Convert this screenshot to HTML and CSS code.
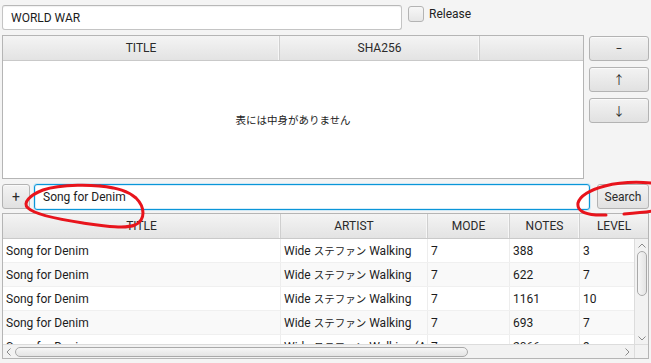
FILE: index.html
```html
<!DOCTYPE html>
<html lang="ja">
<head>
<meta charset="utf-8">
<link rel="stylesheet" href="styles.css">
</head>
<body>
<div class="app">
  <div class="toprow">
    <div class="field query">WORLD WAR</div>
    <div class="check"><span class="box"></span><span class="check-label">Release</span></div>
  </div>

  <div class="midrow">
    <div class="table upper">
      <div class="thead up-cols">
        <div class="th">TITLE</div>
        <div class="th">SHA256</div>
        <div class="th last"></div>
      </div>
      <div class="placeholder"><span class="jp">表には中身がありません</span></div>
    </div>
    <div class="side">
      <div class="btn side-btn">−</div>
      <div class="btn side-btn">↑</div>
      <div class="btn side-btn">↓</div>
    </div>
  </div>

  <div class="searchrow">
    <div class="btn plus">+</div>
    <div class="field focused">Song for Denim</div>
    <div class="btn search-btn">Search</div>
  </div>

  <div class="table lower">
    <div class="thead lo-head">
      <div class="th">TITLE</div>
      <div class="th">ARTIST</div>
      <div class="th">MODE</div>
      <div class="th">NOTES</div>
      <div class="th last">LEVEL</div>
    </div>
    <div class="lower-main">
      <div class="rows">
        <div class="tr lo-cols"><div class="td">Song for Denim</div><div class="td">Wide&nbsp;<span class="jp">ステファン</span>&nbsp;Walking</div><div class="td">7</div><div class="td">388</div><div class="td">3</div></div>
        <div class="tr lo-cols odd"><div class="td">Song for Denim</div><div class="td">Wide&nbsp;<span class="jp">ステファン</span>&nbsp;Walking</div><div class="td">7</div><div class="td">622</div><div class="td">7</div></div>
        <div class="tr lo-cols"><div class="td">Song for Denim</div><div class="td">Wide&nbsp;<span class="jp">ステファン</span>&nbsp;Walking</div><div class="td">7</div><div class="td">1161</div><div class="td">10</div></div>
        <div class="tr lo-cols odd"><div class="td">Song for Denim</div><div class="td">Wide&nbsp;<span class="jp">ステファン</span>&nbsp;Walking</div><div class="td">7</div><div class="td">693</div><div class="td">7</div></div>
        <div class="tr lo-cols"><div class="td">Song for Denim</div><div class="td">Wide&nbsp;<span class="jp">ステファン</span>&nbsp;Walking (A</div><div class="td">7</div><div class="td">2066</div><div class="td">9</div></div>
      </div>
      <div class="vbar">
        <svg class="arrow" width="8" height="5" viewBox="0 0 8 5"><path d="M0.5 4.5 L4 1 L7.5 4.5" fill="none" stroke="#8a8a8a" stroke-width="1"/></svg>
        <div class="vthumb"></div>
        <div class="vspace"></div>
        <svg class="arrow" width="8" height="5" viewBox="0 0 8 5"><path d="M0.5 0.5 L4 4 L7.5 0.5" fill="none" stroke="#8a8a8a" stroke-width="1"/></svg>
      </div>
    </div>
    <div class="hbar">
      <div class="htrack">
        <svg class="arrow" width="5" height="8" viewBox="0 0 5 8"><path d="M4.5 0.5 L1 4 L4.5 7.5" fill="none" stroke="#8a8a8a" stroke-width="1"/></svg>
        <div class="hthumb"></div>
        <div class="hspace"></div>
        <svg class="arrow" width="5" height="8" viewBox="0 0 5 8"><path d="M0.5 0.5 L4 4 L0.5 7.5" fill="none" stroke="#8a8a8a" stroke-width="1"/></svg>
      </div>
      <div class="corner"></div>
    </div>
  </div>

  <svg class="marks" width="651" height="363" viewBox="0 0 651 363">
    <path d="M113 188 C 95 184, 60 184, 43 190 C 30 195, 22 203, 28 208 C 33 213, 50 218, 83 223 C 105 226, 125 229, 135 225 C 146 220, 145 207, 136 198 C 128 191, 118 188, 100 186" fill="none" stroke="#e8141c" stroke-width="3" stroke-linecap="round"/>
    <path d="M652 183 C 640 182, 620 182, 605 186 C 590 190, 580 196, 578 203 C 577 210, 583 214, 596 215 L 606 215" fill="none" stroke="#e8141c" stroke-width="3" stroke-linecap="round"/>
    <path d="M624 214 C 635 213, 645 212, 652 211" fill="none" stroke="#e8141c" stroke-width="3" stroke-linecap="round"/>
  </svg>
</div>
</body>
</html>
```

FILE: styles.css
```css
* { box-sizing: border-box; }
html, body { margin: 0; padding: 0; }
body {
  background: #f4f4f4;
  font-family: "Roboto", "Noto Sans CJK JP", sans-serif;
  font-size: 12px;
  color: #222222;
  width: 651px;
  height: 363px;
  overflow: hidden;
}
.app { position: relative; width: 651px; height: 363px; }
.jp { font-family: "Noto Sans CJK JP", sans-serif; font-size: 10.5px; }

.field {
  background: #ffffff;
  border: 1px solid #c4c4c4;
  border-top-color: #b8b8b8;
  border-radius: 3px;
  box-shadow: inset 0 1px 1px rgba(0,0,0,0.06);
  display: flex;
  align-items: center;
  padding-left: 8px;
  color: #1c1c1c;
  white-space: nowrap;
}

.toprow {
  display: flex;
  align-items: flex-start;
  height: 35px;
  padding: 5px 0 0 2px;
}
.query { width: 400px; height: 25px; }
.check { display: flex; align-items: center; margin-left: 6px; margin-top: 1px; height: 16px; }
.box {
  width: 16px; height: 16px;
  border: 1px solid #b4b4b4;
  border-radius: 3px;
  background: linear-gradient(#f7f7f7, #e6e6e6);
}
.check-label { margin-left: 5px; }

.midrow { display: flex; padding-left: 2px; height: 144px; }

.table {
  background: #ffffff;
  border: 1px solid #b5b5b5;
}
.upper { width: 582px; height: 144px; display: flex; flex-direction: column; }

.thead {
  display: grid;
  height: 25px;
  flex: none;
  background: linear-gradient(#f4f4f4, #e3e3e3);
  border-bottom: 1px solid #c9c9c9;
}
.th {
  display: flex; align-items: center; justify-content: center;
  border-right: 1px solid #cfcfcf;
  box-shadow: inset -1px 0 0 #f7f7f7;
  color: #2a2a2a;
  white-space: nowrap;
}
.th.last { border-right: none; box-shadow: none; }
.up-cols { grid-template-columns: 277px 200px 103px; }
.placeholder {
  flex: 1;
  display: flex; align-items: center; justify-content: center;
  color: #222;
  padding-bottom: 1px;
}

.side { display: flex; flex-direction: column; gap: 6px; margin-left: 5px; padding-top: 1px; }
.btn {
  display: flex; align-items: center; justify-content: center;
  background: linear-gradient(#f3f3f3, #e1e1e1);
  border: 1px solid #b3b3b3;
  border-radius: 3px;
  box-shadow: inset 0 1px 0 #fafafa;
  color: #2a2a2a;
}
.side-btn { width: 60px; height: 25px; font-size: 12px; }

.searchrow {
  display: flex; align-items: flex-start;
  height: 34px;
  padding: 5px 0 0 2px;
}
.plus { width: 28px; height: 25px; font-size: 14px; }
.focused {
  width: 556px; height: 26px; margin-left: 4px;
  border: 1px solid #0a96d8;
  box-shadow: 0 0 0 1px #cfe8f5, inset 0 0 0 1px #d8eefb;
  padding-left: 8px;
}
.search-btn { width: 52px; height: 25px; margin-left: 7px; }

.lower {
  margin: 0 0 0 2px;
  width: 647px; height: 146px;
  display: flex; flex-direction: column;
  overflow: hidden;
}
.lo-head { grid-template-columns: 278px 147px 82px 70px 68px; }
.lower-main { display: flex; height: 105px; }
.lo-cols { grid-template-columns: 278px 147px 82px 70px 54px; }
.rows { width: 631px; height: 105px; overflow: hidden; }
.tr { display: grid; height: 24px; background: #ffffff; border-bottom: 1px solid #f0f0f0; }
.tr.odd { background: #f9f9f9; }
.td {
  display: flex; align-items: center;
  padding-left: 3px;
  border-right: 1px solid #ededed;
  white-space: nowrap; overflow: hidden;
  color: #1c1c1c;
}
.td:last-child { border-right: none; }

.vbar {
  width: 14px;
  background: #f2f2f2;
  border-left: 1px solid #dcdcdc;
  display: flex; flex-direction: column; align-items: center;
  padding: 4px 0 3px 0;
}
.vthumb {
  width: 10px; height: 45px; margin-top: 3px;
  border: 1px solid #a9a9a9; border-radius: 5px;
  background: linear-gradient(90deg, #f6f6f6, #e4e4e4);
}
.vspace { flex: 1; }

.hbar { display: flex; height: 14px; flex: none; border-top: 1px solid #dcdcdc; }
.htrack {
  width: 631px; background: #f2f2f2;
  display: flex; align-items: center; padding: 0 4px 0 3px;
}
.hthumb {
  width: 453px; height: 10px; margin-left: 4px;
  border: 1px solid #a9a9a9; border-radius: 5px;
  background: linear-gradient(#f6f6f6, #e4e4e4);
}
.hspace { flex: 1; }
.corner { width: 14px; background: #f2f2f2; border-left: 1px solid #dcdcdc; }
.arrow { display: block; flex: none; }

.marks { position: absolute; left: 0; top: 0; pointer-events: none; }
```
